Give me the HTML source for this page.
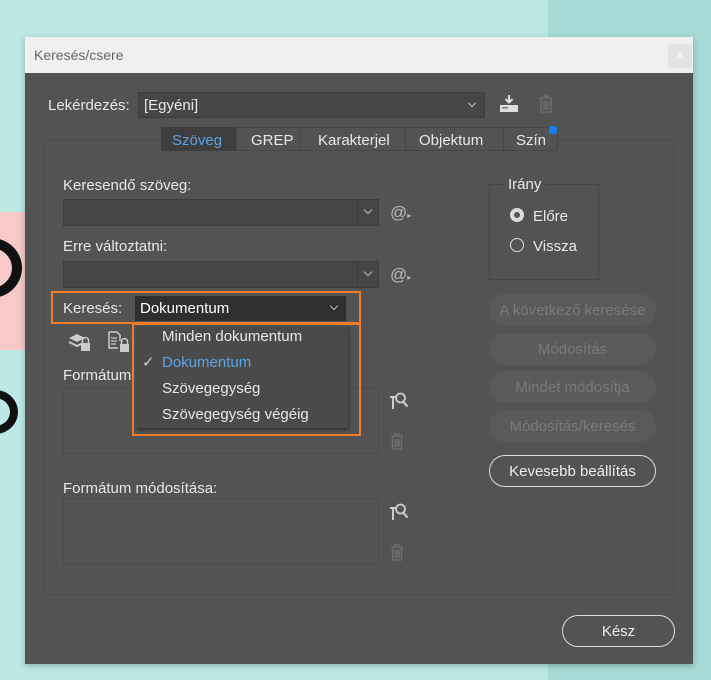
<!DOCTYPE html>
<html><head><meta charset="utf-8"><style>
*{box-sizing:border-box;margin:0;padding:0}
body{width:711px;height:680px;overflow:hidden;background:#bde9e4;position:relative;font-family:"Liberation Sans Narrow","Liberation Sans",sans-serif;font-size:15px;color:#e8e8e8}
.a{position:absolute}
.t{position:absolute;white-space:nowrap;line-height:18px}
.inp{position:absolute;background:#464646;border:1px solid #3c3c3c}
.btn{position:absolute;border-radius:16px;text-align:center;white-space:nowrap}
.dis{background:#5a5a5a;color:#7a7a7a;line-height:33px}
.out{border:1.5px solid #dcdcdc;color:#eee;line-height:28px;padding-top:2px}
.chev{position:absolute;width:6px;height:6px;border-right:1.3px solid #bbb;border-bottom:1.3px solid #bbb;transform:rotate(45deg)}
</style></head><body>
<div class="a" style="left:548px;top:0;width:163px;height:680px;background:#a8dbd7"></div>
<div class="a" style="left:0;top:212px;width:25px;height:138px;background:#f7c9c9"></div>
<div class="a" style="left:-40px;top:238px;width:62px;height:60px;border:10px solid #111;border-radius:50%"></div>
<div class="a" style="left:-28px;top:390px;width:46px;height:44px;border:8px solid #111;border-radius:50%"></div>
<div class="a" style="left:25px;top:37px;width:668px;height:627px;background:#535353;box-shadow:0 2px 6px rgba(0,0,0,.25)"></div>
<div class="a" style="left:25px;top:37px;width:668px;height:36px;background:#f0f0f0"></div>
<div class="t" style="left:34px;top:46px;color:#666;font-size:14px">Keresés/csere</div>
<div class="a" style="left:668px;top:44px;width:24px;height:24px;background:#e3e3e3;color:#fff;text-align:center;line-height:24px;font-size:13px">×</div>

<div class="t" style="left:48px;top:97px">Lekérdezés:</div>
<div class="inp" style="left:138px;top:92px;width:347px;height:26px"></div>
<div class="t" style="left:144px;top:97px">[Egyéni]</div>
<div class="chev" style="left:469px;top:100px"></div>
<svg class="a" style="left:498px;top:94px" width="22" height="20"><path d="M11 1v7M7.5 5l3.5 3.5L14.5 5" stroke="#ddd" stroke-width="2" fill="none"/><rect x="2" y="11" width="18" height="7" fill="#ddd"/><rect x="4" y="13" width="6" height="1.5" fill="#777"/></svg>
<svg class="a" style="left:538px;top:94px" width="16" height="20"><path d="M1 4h14M6 4V2h4v2M3 5v13h10V5M6 7v9M8 7v9M10 7v9" stroke="#707070" stroke-width="1.3" fill="none"/></svg>

<div class="a" style="left:44px;top:140px;width:630px;height:455px;border:1px solid #4a4a4a;border-radius:3px"></div>
<div class="a" style="left:161px;top:127px;width:397px;height:24px;background:#535353;border:1px solid #474747"></div>
<div class="a" style="left:161px;top:127px;width:75px;height:24px;background:#3e3e3e"></div>
<div class="t" style="left:172px;top:132px;color:#5ea3e6">Szöveg</div>
<div class="a" style="left:236px;top:128px;width:1px;height:22px;background:#474747"></div>
<div class="t" style="left:251px;top:132px">GREP</div>
<div class="a" style="left:300px;top:128px;width:1px;height:22px;background:#474747"></div>
<div class="t" style="left:318px;top:132px">Karakterjel</div>
<div class="a" style="left:405px;top:128px;width:1px;height:22px;background:#474747"></div>
<div class="t" style="left:419px;top:132px">Objektum</div>
<div class="a" style="left:503px;top:128px;width:1px;height:22px;background:#474747"></div>
<div class="t" style="left:516px;top:132px">Szín</div>
<div class="a" style="left:549px;top:126px;width:8px;height:8px;background:#1a7af0;border-radius:2px"></div>

<div class="t" style="left:63px;top:177px">Keresendő szöveg:</div>
<div class="inp" style="left:63px;top:199px;width:316px;height:27px"></div>
<div class="a" style="left:357px;top:200px;width:1px;height:25px;background:#3c3c3c"></div>
<div class="chev" style="left:365px;top:207px"></div>
<div class="t" style="left:390px;top:204px;font-size:17px;color:#bbb">@<span style="font-size:8px">▸</span></div>
<div class="t" style="left:63px;top:238px">Erre változtatni:</div>
<div class="inp" style="left:63px;top:261px;width:316px;height:27px"></div>
<div class="a" style="left:357px;top:262px;width:1px;height:25px;background:#3c3c3c"></div>
<div class="chev" style="left:365px;top:269px"></div>
<div class="t" style="left:390px;top:266px;font-size:17px;color:#bbb">@<span style="font-size:8px">▸</span></div>

<div class="a" style="left:489px;top:184px;width:110px;height:96px;border:1px solid #474747"></div>
<div class="t" style="left:504px;top:176px;background:#535353;padding:0 4px">Irány</div>
<div class="a" style="left:510px;top:208px;width:14px;height:14px;border-radius:50%;background:#ddd"></div>
<div class="a" style="left:514px;top:212px;width:6px;height:6px;border-radius:50%;background:#555"></div>
<div class="t" style="left:533px;top:208px">Előre</div>
<div class="a" style="left:510px;top:238px;width:14px;height:14px;border-radius:50%;border:1.3px solid #ddd"></div>
<div class="t" style="left:533px;top:238px">Vissza</div>

<div class="t" style="left:63px;top:300px">Keresés:</div>
<div class="a" style="left:135px;top:296px;width:211px;height:25px;background:#2f2f2f"></div>
<div class="t" style="left:140px;top:300px;color:#fff">Dokumentum</div>
<div class="chev" style="left:331px;top:303px"></div>
<div class="a" style="left:51px;top:291px;width:310px;height:33px;border:2.5px solid #f07c28"></div>

<svg class="a" style="left:67px;top:331px" width="26" height="22"><path d="M2 7l8-4 8 4-8 4z" fill="#ccc"/><path d="M2 11l8 4 5-2.5" stroke="#ccc" stroke-width="2" fill="none"/><rect x="14" y="12" width="9" height="8" fill="#ccc"/><path d="M15.5 12v-2.5a3 3 0 016 0V12" stroke="#ccc" stroke-width="1.5" fill="none"/></svg>
<svg class="a" style="left:107px;top:330px" width="24" height="24"><path d="M2 2h8l3 3v6M2 2v16h9" stroke="#ccc" stroke-width="1.5" fill="none"/><path d="M4 8h6M4 11h6M4 14h5" stroke="#ccc" stroke-width="1.3"/><rect x="13" y="14" width="9" height="8" fill="#ccc"/><path d="M14.5 14v-2.5a3 3 0 016 0V14" stroke="#ccc" stroke-width="1.5" fill="none"/></svg>

<div class="t" style="left:63px;top:367px">Formátum</div>
<div class="a" style="left:63px;top:388px;width:316px;height:66px;border:1px solid #4b4b4b"></div>
<svg class="a" style="left:388px;top:391px" width="22" height="20"><path d="M2 6h6M5 6v12" stroke="#ccc" stroke-width="2"/><circle cx="12.5" cy="7" r="4.5" stroke="#ccc" stroke-width="1.8" fill="none"/><path d="M15 10.5l4.5 5" stroke="#ccc" stroke-width="2.2"/></svg>
<svg class="a" style="left:390px;top:432px" width="14" height="18"><path d="M1 4h12M5 4V2h4v2M2.5 5v12h9V5M5 7v8M7 7v8M9 7v8" stroke="#707070" stroke-width="1.3" fill="none"/></svg>
<div class="t" style="left:63px;top:480px">Formátum módosítása:</div>
<div class="a" style="left:63px;top:498px;width:316px;height:67px;border:1px solid #4b4b4b"></div>
<svg class="a" style="left:388px;top:502px" width="22" height="20"><path d="M2 6h6M5 6v12" stroke="#ccc" stroke-width="2"/><circle cx="12.5" cy="7" r="4.5" stroke="#ccc" stroke-width="1.8" fill="none"/><path d="M15 10.5l4.5 5" stroke="#ccc" stroke-width="2.2"/></svg>
<svg class="a" style="left:390px;top:543px" width="14" height="18"><path d="M1 4h12M5 4V2h4v2M2.5 5v12h9V5M5 7v8M7 7v8M9 7v8" stroke="#707070" stroke-width="1.3" fill="none"/></svg>

<div class="a" style="left:136px;top:326px;width:212px;height:102px;background:#4a4a4a;box-shadow:1px 2px 3px rgba(0,0,0,.4)"></div>
<div class="t" style="left:162px;top:328px">Minden dokumentum</div>
<div class="t" style="left:142px;top:354px;color:#ccc">✓</div>
<div class="t" style="left:162px;top:354px;color:#5ea3e6">Dokumentum</div>
<div class="t" style="left:162px;top:380px">Szövegegység</div>
<div class="t" style="left:162px;top:406px">Szövegegység végéig</div>
<div class="a" style="left:132px;top:323px;width:229px;height:113px;border:2.5px solid #f07c28"></div>

<div class="btn dis" style="left:489px;top:294px;width:167px;height:32px">A következő keresése</div>
<div class="btn dis" style="left:489px;top:333px;width:167px;height:32px">Módosítás</div>
<div class="btn dis" style="left:489px;top:371px;width:167px;height:32px">Mindet módosítja</div>
<div class="btn dis" style="left:489px;top:410px;width:167px;height:32px">Módosítás/keresés</div>
<div class="btn out" style="left:489px;top:455px;width:167px;height:32px">Kevesebb beállítás</div>
<div class="btn out" style="left:562px;top:615px;width:113px;height:32px">Kész</div>
</body></html>
